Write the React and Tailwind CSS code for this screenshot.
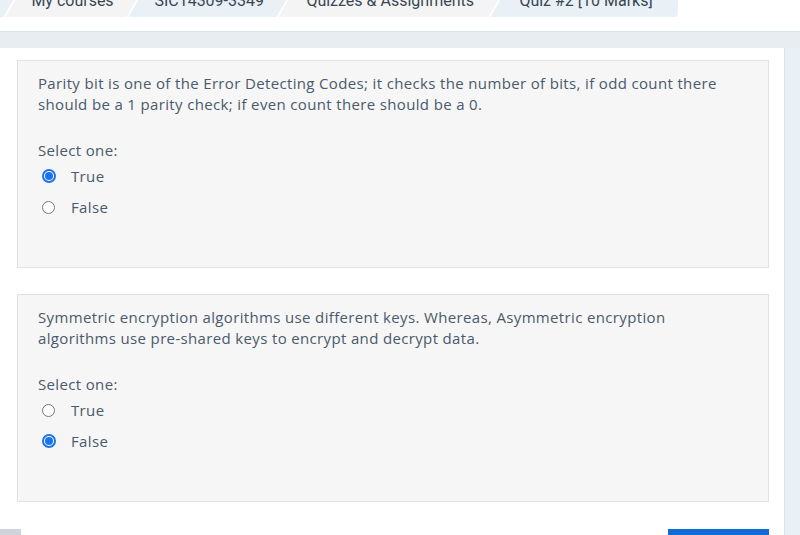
import React from 'react';

const crumbs = [
  { label: '', w: 'w-[60px]', bg: 'bg-[#e9f1f6]', align: 'justify-center' },
  { label: 'My courses', w: 'w-[121px]', bg: 'bg-[#f4f4f4]', align: 'justify-center' },
  { label: 'SIC14309-3349', w: 'w-[148px]', bg: 'bg-[#e9f1f6]', align: 'justify-center' },
  { label: 'Quizzes & Assignments', w: 'w-[210px]', bg: 'bg-[#f4f4f4]', align: 'justify-center' },
  { label: 'Quiz #2 [10 Marks]', w: 'w-[220px]', bg: 'bg-[#e9f1f6]', align: 'justify-start pl-[22px]' },
];

const Radio = ({ checked }) =>
  checked ? (
    <span className="w-[14px] h-[14px] rounded-full border-2 border-[#1a73e8] bg-white flex items-center justify-center">
      <span className="w-[8px] h-[8px] rounded-full bg-[#1a73e8]" />
    </span>
  ) : (
    <span className="w-[13px] h-[13px] rounded-full border border-[#767676] bg-white" />
  );

const Question = ({ lines, answer }) => (
  <div className="bg-[#f6f6f6] border border-[#e2e2e2] pt-[12px] pb-[50px] px-[20px] text-[15px] leading-[21px] tracking-[0.35px] text-[#4a5a6a]">
    <p>
      {lines[0]}
      <br />
      {lines[1]}
    </p>
    <p className="mt-[25px]">Select one:</p>
    <div className="mt-[4px] flex flex-col gap-[10px]">
      {['True', 'False'].map((opt) => (
        <label key={opt} className="flex items-center h-[21px] pt-[1px]">
          <span className="w-[33px] pl-[4px] flex items-center">
            <Radio checked={answer === opt} />
          </span>
          <span>{opt}</span>
        </label>
      ))}
    </div>
  </div>
);

export default function App() {
  return (
    <div className="w-[800px] h-[535px] overflow-hidden bg-white" style={{ fontFamily: '"Open Sans", sans-serif' }}>
      {/* Breadcrumb */}
      <div className="h-[31px] bg-white">
        <div className="w-[678px] h-[17px] overflow-hidden rounded-br-[4px] flex items-end">
          <div className="flex h-[40px] -ml-[45px] gap-[2px] shrink-0" style={{ fontFamily: 'Roboto, sans-serif' }}>
            {crumbs.map((c, i) => (
              <div key={i} className={`${c.w} ${c.bg} ${c.align} h-full skew-x-[-30deg] flex items-end shrink-0`}>
                <span className="skew-x-[30deg] text-[16px] leading-[16px] pb-[8px] text-[#3a4654] whitespace-nowrap">{c.label}</span>
              </div>
            ))}
          </div>
        </div>
      </div>

      {/* Band */}
      <div className="h-[17px] border-t border-[#dbe2e8] bg-[#e8edf1]" />

      {/* Main */}
      <div className="flex h-[487px]">
        <div className="w-[785px] bg-white border-r border-[#dce3e9] pt-[12px] pl-[17px] pr-[15px] flex flex-col">
          <Question
            lines={[
              'Parity bit is one of the Error Detecting Codes; it checks the number of bits, if odd count there',
              'should be a 1 parity check; if even count there should be a 0.',
            ]}
            answer="True"
          />
          <div className="mt-[26px]">
            <Question
              lines={[
                'Symmetric encryption algorithms use different keys. Whereas, Asymmetric encryption',
                'algorithms use pre-shared keys to encrypt and decrypt data.',
              ]}
              answer="False"
            />
          </div>
          <div className="mt-[27px] flex justify-between -ml-[17px]">
            <div className="w-[21px] h-[20px] bg-[#ced4da]" />
            <div className="w-[101px] h-[20px] bg-[#0f6cd0]" />
          </div>
        </div>
        <div className="flex-1 bg-[#eaf1f6]" />
      </div>
    </div>
  );
}
